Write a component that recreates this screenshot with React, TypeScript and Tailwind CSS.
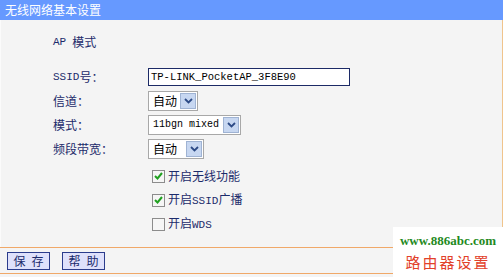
import React from 'react';

const cjk = '"Noto Sans CJK SC", "Liberation Sans", sans-serif';
const mono = '"Liberation Mono", "Noto Sans CJK SC", monospace';

function Arrow() {
  return (
    <div className="w-[16px] h-[16px] shrink-0 border border-[#9fb3d3] bg-[#c7d7f1] flex items-center justify-center">
      <svg width="9" height="6" viewBox="0 0 9 6">
        <path d="M1 1 L4.5 4.5 L8 1" fill="none" stroke="#2c4a86" strokeWidth="1.8" />
      </svg>
    </div>
  );
}

function Select({ value, width, latin }: { value: string; width: string; latin?: boolean }) {
  return (
    <div className={`${width} h-[20px] bg-white border border-[#a8a8a8] flex items-center justify-between pl-[4px] pr-[1px]`}>
      <span
        className={latin ? 'text-[10px] text-black whitespace-nowrap' : 'text-[12px] text-black whitespace-nowrap'}
        style={{ fontFamily: latin ? mono : cjk }}
      >
        {value}
      </span>
      <Arrow />
    </div>
  );
}

function Check({ checked, label }: { checked: boolean; label: React.ReactNode }) {
  return (
    <div className="h-[24px] flex items-center pl-[4px]">
      <div className="w-[13px] h-[13px] border border-[#8c8c8c] bg-[#f6f6f6] flex items-center justify-center">
        {checked && (
          <svg width="9" height="8" viewBox="0 0 9 8">
            <path d="M1 4 L3.5 6.5 L8 1" fill="none" stroke="#21a121" strokeWidth="2" />
          </svg>
        )}
      </div>
      <span className="ml-[3px] text-[12px] text-[#1c2b6b]">{label}</span>
    </div>
  );
}

function Lat({ children }: { children: React.ReactNode }) {
  return <span className="text-[11px]" style={{ fontFamily: mono }}>{children}</span>;
}

export default function App() {
  return (
    <div className="w-[503px] h-[277px] bg-[#f4f4f4] relative overflow-hidden flex flex-col" style={{ fontFamily: cjk }}>
      <div className="h-[20px] shrink-0 bg-[#6699ff] text-white text-[12px] leading-[20px] pl-[5px]">无线网络基本设置</div>

      <div className="h-[227px] shrink-0 overflow-hidden border-r border-[#f0c48c] border-l border-l-[#fbfbfb] pl-[52px]">
        <div className="mt-[12px] h-[20px] flex items-center text-[12px] leading-none text-[#1c2b6b]">
          <Lat>AP</Lat>
          <span className="ml-[6px]">模式</span>
        </div>

        <div className="mt-[13px] grid grid-cols-[95px_1fr] text-[12px] leading-none text-[#1c2b6b]">
          <div className="h-[24px] flex items-center"><Lat>SSID</Lat>号：</div>
          <div className="h-[24px] flex items-center">
            <div className="w-[202px] h-[18px] bg-white border border-[#1c2a66] flex items-center pl-[2px]">
              <span className="text-[10.5px] text-black whitespace-nowrap" style={{ fontFamily: mono }}>TP-LINK_PocketAP_3F8E90</span>
            </div>
          </div>

          <div className="h-[24px] flex items-center">信道：</div>
          <div className="h-[24px] flex items-center"><Select value="自动" width="w-[50px]" /></div>

          <div className="h-[24px] flex items-center">模式：</div>
          <div className="h-[24px] flex items-center"><Select value="11bgn mixed" width="w-[93px]" latin /></div>

          <div className="h-[24px] flex items-center">频段带宽：</div>
          <div className="h-[24px] flex items-center"><Select value="自动" width="w-[56px]" /></div>

          <div />
          <div className="mt-[3px]">
            <Check checked label="开启无线功能" />
            <Check checked label={<>开启<Lat>SSID</Lat>广播</>} />
            <Check checked={false} label={<>开启<Lat>WDS</Lat></>} />
          </div>
        </div>
      </div>

      <div className="h-[1px] shrink-0 bg-[#f0a868]" />
      <div className="h-[25px] shrink-0 flex items-center pl-[7px] gap-[12px]">
        <div className="w-[43px] h-[18px] bg-[#dfe1fb] border border-[#2b3c8c] text-[12px] text-[#1c2b6b] flex items-center justify-center gap-[6px]">
          <span>保</span><span>存</span>
        </div>
        <div className="w-[43px] h-[18px] bg-[#dfe1fb] border border-[#2b3c8c] text-[12px] text-[#1c2b6b] flex items-center justify-center gap-[6px]">
          <span>帮</span><span>助</span>
        </div>
      </div>
      <div className="h-[1px] shrink-0 bg-[#f0a868]" />

      <div className="absolute left-[393px] top-[227px] w-[110px] h-[50px] bg-white flex flex-col items-center">
        <div className="mt-[6px] text-[13px] font-bold text-[#1f8a22] leading-[16px]" style={{ fontFamily: '"Liberation Serif", serif' }}>
          www.886abc.com
        </div>
        <div className="mt-[4px] text-[15px] text-[#e2412a] tracking-[2px] leading-[18px]">路由器设置</div>
      </div>
    </div>
  );
}
